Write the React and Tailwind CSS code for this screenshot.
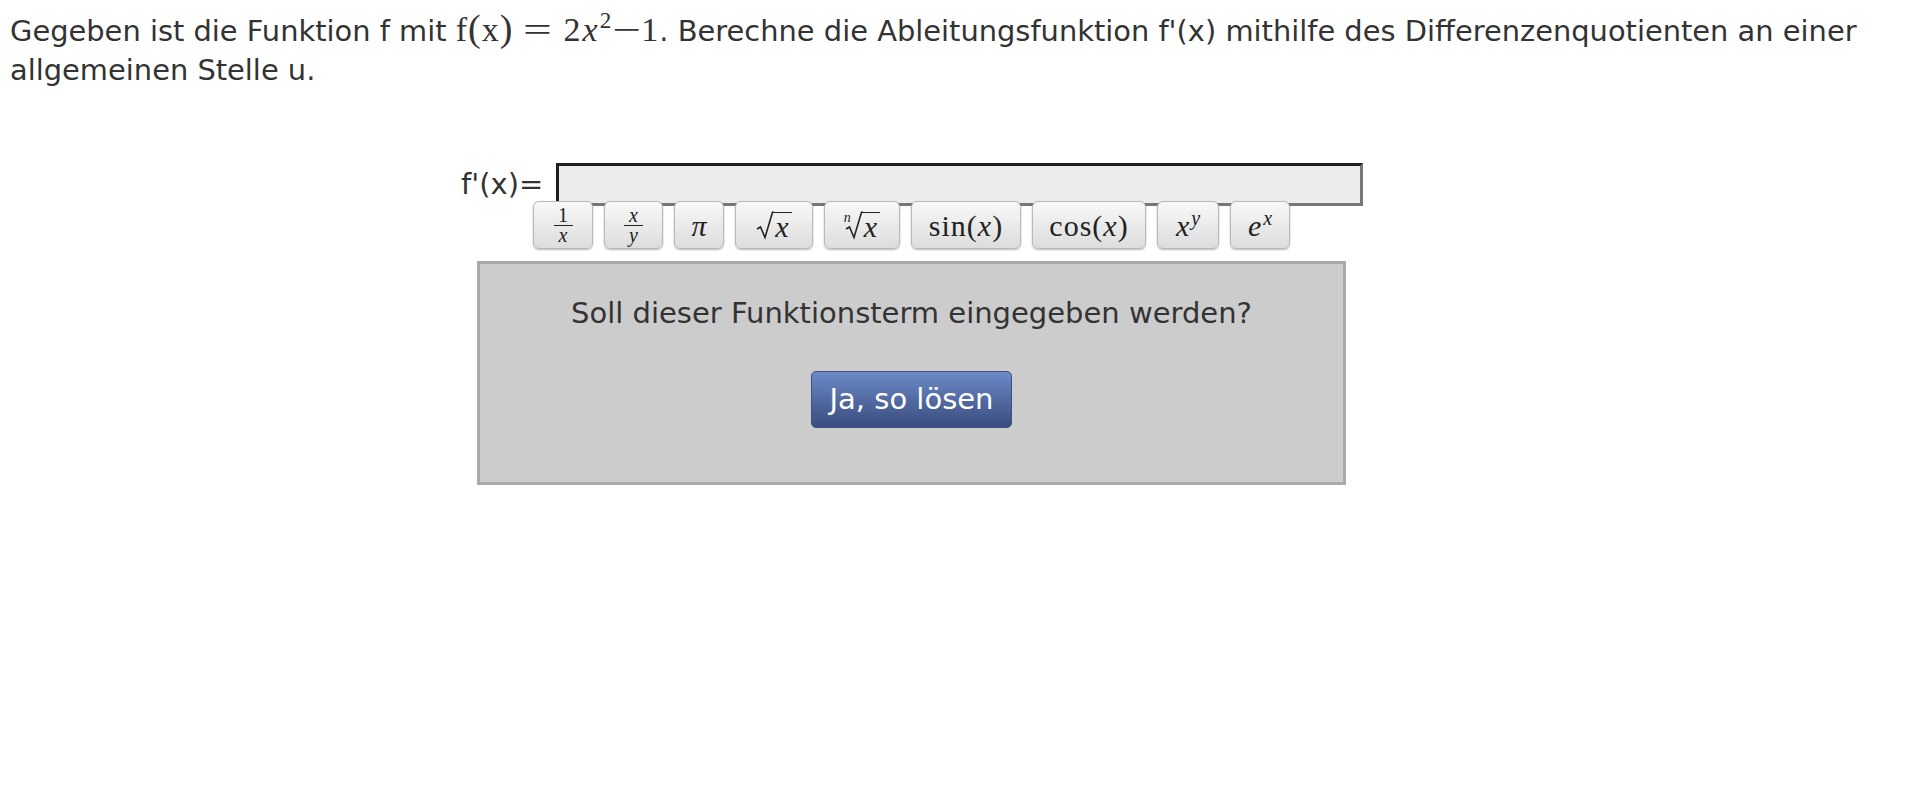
import React from "react";

const SANS = "font-['DejaVu_Sans',Verdana,sans-serif]";
const SERIF = "font-['Liberation_Serif','Times_New_Roman',serif]";

function Frac({ top, bottom }) {
  return (
    <span className={`inline-flex flex-col items-center ${SERIF} text-[20px] text-[#222]`}>
      <span className="leading-[18px]">{top}</span>
      <span className="mt-[1px] h-0 w-[19px] border-t-[1.5px] border-[#222]"></span>
      <span className="italic leading-[18px]">{bottom}</span>
    </span>
  );
}

function Radical({ index }) {
  return (
    <span className={`inline-flex items-end ${SERIF} text-[30px] text-[#222]`}>
      {index && <span className="relative -top-[15px] -mr-[6px] text-[14px] italic leading-none">{index}</span>}
      <svg width="18" height="29" viewBox="0 0 18 29" className="shrink-0">
        <path d="M1 18 L4.5 16 L9 26.5 L16.5 1.2 L18 1.2" fill="none" stroke="#222" strokeWidth="1.6" strokeLinejoin="miter" />
      </svg>
      <span className="border-t-[1.6px] border-[#222] pl-[1px] pr-[3px] italic leading-[27px]">x</span>
    </span>
  );
}

function TB({ w, children }) {
  return (
    <div
      className={`flex h-[48px] shrink-0 items-center justify-center rounded-[6px] border border-[#b9b9b9] bg-linear-to-b from-[#f8f8f8] to-[#dddddd] shadow-[0_1px_2px_rgba(0,0,0,0.28)] ${w}`}
    >
      {children}
    </div>
  );
}

export default function App() {
  return (
    <div className={`min-h-[810px] w-[1920px] bg-white ${SANS} text-[#333333]`}>
      <p className="px-[10px] pt-[9px] text-[28.9px] leading-[39px]">
        Gegeben ist die Funktion f mit{" "}
        <span className={`${SERIF} text-[34px] leading-none tracking-[1px]`}>
          f<span className="text-[38px]">(</span>x<span className="text-[38px]">)</span>
          <span className="mx-[15px] inline-block scale-x-[1.5]">=</span>2<span className="ml-[1px] italic">x</span>
          <span className="relative -top-[13px] ml-[1px] text-[23px]">2</span>
          <span className="ml-[5px] inline-block scale-x-[1.5]">−</span>
          <span className="ml-[4px]">1</span>
        </span>
        . Berechne die Ableitungsfunktion f'(x) mithilfe des Differenzenquotienten an einer allgemeinen Stelle u.
      </p>

      <div className="mt-[73px] flex items-end pl-[461px]">
        <span className="mb-[2px] text-[29px] leading-[39px] text-[#333]">f'(x)=</span>
        <div className="ml-[13px] h-[43px] w-[807px] border-[3px] border-t-[#1e1e1e] border-l-[#1e1e1e] border-r-[#777777] border-b-[#777777] bg-[#ececec]"></div>
      </div>

      <div className="relative z-10 -mt-[5px] flex gap-[11px] pl-[533px]">
        <TB w="w-[60px]">
          <Frac top="1" bottom="x" />
        </TB>
        <TB w="w-[59px]">
          <Frac top={<span className="italic">x</span>} bottom="y" />
        </TB>
        <TB w="w-[50px]">
          <span className={`${SERIF} text-[30px] italic text-[#222]`}>π</span>
        </TB>
        <TB w="w-[78px]">
          <Radical />
        </TB>
        <TB w="w-[76px]">
          <Radical index="n" />
        </TB>
        <TB w="w-[110px]">
          <span className={`${SERIF} text-[30px] tracking-[1px] text-[#222]`}>
            sin(<span className="italic">x</span>)
          </span>
        </TB>
        <TB w="w-[114px]">
          <span className={`${SERIF} text-[30px] tracking-[1px] text-[#222]`}>
            cos(<span className="italic">x</span>)
          </span>
        </TB>
        <TB w="w-[62px]">
          <span className={`${SERIF} text-[30px] italic text-[#222]`}>
            x<span className="relative -top-[11px] ml-[2px] text-[20px]">y</span>
          </span>
        </TB>
        <TB w="w-[60px]">
          <span className={`${SERIF} text-[30px] italic text-[#222]`}>
            e<span className="relative -top-[11px] ml-[2px] text-[20px]">x</span>
          </span>
        </TB>
      </div>

      <div className="ml-[477px] mt-[12px] w-[869px] border-[3px] border-[#aaaaaa] bg-[#cccccc] pb-[54px] pt-[29px]">
        <div className="text-center text-[29px] leading-[40px] text-[#333]">
          Soll dieser Funktionsterm eingegeben werden?
        </div>
        <div className="mt-[38px] flex justify-center">
          <button className="flex h-[57px] w-[201px] items-center justify-center rounded-[5px] border border-[#3d5088] bg-linear-to-b from-[#6c8ac8] to-[#3a4d7f] text-[29px] leading-none text-white">
            Ja, so lösen
          </button>
        </div>
      </div>
    </div>
  );
}
